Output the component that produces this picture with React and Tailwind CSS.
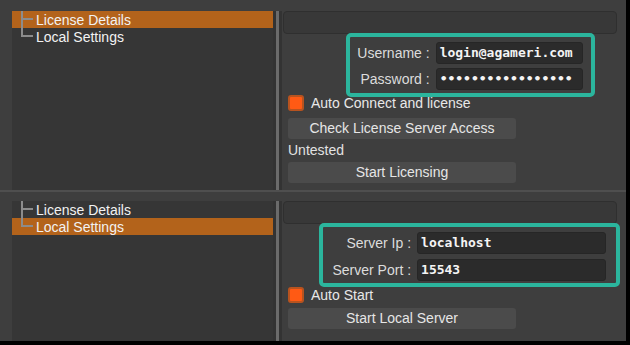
import React from 'react';

const sans = { fontFamily: '"Liberation Sans", Arial, sans-serif' };
const mono = { fontFamily: '"DejaVu Sans Mono", "Liberation Mono", monospace' };

const TreeRow = ({ label, selected, last }) => (
  <div className={`relative flex items-center h-[17px] ${selected ? 'bg-[#b3631b]' : ''}`}>
    <svg width="24" height="17" className="shrink-0">
      <rect x="9" y="0" width="2" height={last ? 9 : 17} fill="#8c8c8c" />
      <rect x="9" y="7" width="12" height="2" fill="#8c8c8c" />
    </svg>
    <span className="text-[14px] text-[#f2f2f2] leading-none" style={sans}>{label}</span>
  </div>
);

const Tree = ({ selected }) => (
  <div className="w-[261px] bg-[#363636] self-stretch">
    <TreeRow label="License Details" selected={selected === 0} />
    <TreeRow label="Local Settings" selected={selected === 1} last />
  </div>
);

const Splitter = () => (
  <div className="w-[9px] self-stretch bg-[#333333]">
    <div className="ml-[3px] w-[3px] h-full bg-[#6b6b6b]" />
  </div>
);

const Field = ({ label, value, labelW, inputW }) => (
  <div className="flex items-center justify-end">
    <span className="text-[14px] text-[#dcdcdc] text-right" style={{ ...sans, width: labelW }}>{label}</span>
    <div
      className="ml-[6px] h-[22px] flex items-center pl-[3px] rounded-[3px] bg-[#2b2b2b] border border-[#262626] text-[13px] font-semibold text-[#f4f4f4] overflow-hidden whitespace-nowrap"
      style={{ ...mono, width: inputW }}
    >
      {value}
    </div>
  </div>
);

const Checkbox = ({ label, className }) => (
  <div className={`flex items-center h-[16px] ml-[6px] ${className}`}>
    <div className="w-[16px] h-[16px] rounded-[3px] border-2 border-[#b8531f] bg-[#ff5a14]" />
    <span className="ml-[7px] text-[14px] leading-[16px] text-[#e8e8e8]" style={sans}>{label}</span>
  </div>
);

const Button = ({ children, className }) => (
  <div
    className={`ml-[6px] w-[228px] h-[21px] rounded-[3px] bg-[#4b4b4b] flex items-center justify-center text-[14px] text-[#e6e6e6] ${className}`}
    style={sans}
  >
    {children}
  </div>
);

const TopBar = () => (
  <div className="ml-px h-[23px] rounded-[4px] bg-[#383838] border border-[#2f2f2f]" />
);

const App = () => {
  return (
    <div className="w-[630px] h-[345px] bg-black">
      <div className="w-[626px] h-[341px] bg-[#3e3e3e] flex flex-col">
        {/* License details window */}
        <div className="h-[190px] pt-[11px] pl-[12px] flex">
          <Tree selected={0} />
          <Splitter />
          <div className="flex-1 flex flex-col pr-[9px]">
            <TopBar />
            <div className="self-end mr-[22px] mt-[-1px] w-[249px] h-[64px] border-4 border-[#2bb59d] rounded-[5px] pt-[5px] pr-[8px] flex flex-col gap-[4px]">
              <Field label="Username :" value="login@agameri.com" labelW={80} inputW={148} />
              <Field label="Password :" value="•••••••••••••••••" labelW={80} inputW={148} />
            </div>
            <Checkbox label="Auto Connect and license" className="mt-[-2px]" />
            <Button className="mt-[7px]">Check License Server Access</Button>
            <div className="ml-[6px] mt-[3px] h-[16px] text-[14px] leading-[16px] text-[#e2e2e2]" style={sans}>Untested</div>
            <Button className="mt-[4px]">Start Licensing</Button>
          </div>
        </div>

        <div className="h-[2px] bg-[#4f4f4f]" />

        {/* Local settings window */}
        <div className="flex-1 pt-[9px] pl-[12px] flex">
          <Tree selected={1} />
          <Splitter />
          <div className="flex-1 flex flex-col pr-[9px]">
            <TopBar />
            <div className="self-end mr-[-3px] mt-[-1px] w-[301px] h-[64px] border-4 border-[#2bb59d] rounded-[5px] pt-[5px] pr-[10px] flex flex-col gap-[5px]">
              <Field label="Server Ip :" value="localhost" labelW={90} inputW={193} />
              <Field label="Server Port :" value="15543" labelW={90} inputW={193} />
            </div>
            <Checkbox label="Auto Start" className="mt-0" />
            <Button className="mt-[5px]">Start Local Server</Button>
          </div>
        </div>
      </div>
    </div>
  );
};

export default App;
